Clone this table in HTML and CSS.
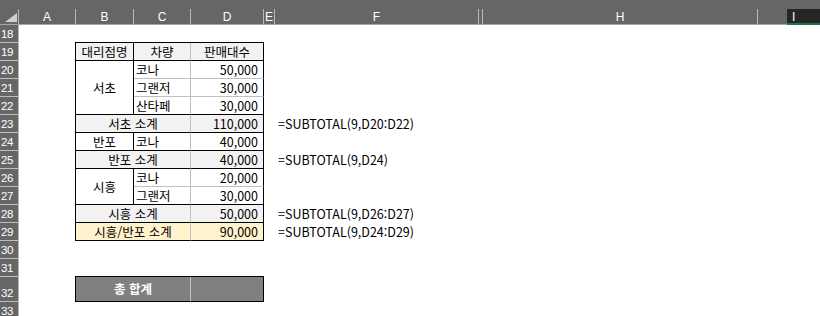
FILE: index.html
```html
<!DOCTYPE html>
<html lang="ko">
<head>
<meta charset="utf-8">
<link rel="stylesheet" href="styles.css">
</head>
<body>
<div class="sheet">
  <div class="colhead">
    <div class="ch corner"><svg width="18" height="15" viewBox="0 0 18 15"><polygon points="17,4 17,13 5,13" fill="#cfcfcf"/></svg></div>
    <div class="ch w-a">A</div>
    <div class="ch w-b">B</div>
    <div class="ch w-c">C</div>
    <div class="ch w-d">D</div>
    <div class="ch w-e">E</div>
    <div class="ch w-f">F</div>
    <div class="ch w-g"></div>
    <div class="ch w-h">H</div>
    <div class="ch w-x"></div>
    <div class="ch sel">I</div>
  </div>
  <div class="body">
    <div class="rowhead">
      <div class="rh">18</div>
      <div class="rh">19</div>
      <div class="rh">20</div>
      <div class="rh">21</div>
      <div class="rh">22</div>
      <div class="rh">23</div>
      <div class="rh">24</div>
      <div class="rh">25</div>
      <div class="rh">26</div>
      <div class="rh">27</div>
      <div class="rh">28</div>
      <div class="rh">29</div>
      <div class="rh">30</div>
      <div class="rh">31</div>
      <div class="rh tall">32</div>
      <div class="rh">33</div>
    </div>
    <div class="content">
      <div class="tables">
        <div class="tbl">
          <div class="c ctr rb bb gray">대리점명</div>
          <div class="c ctr bb gray">차량</div>
          <div class="c ctr rb bb gray">판매대수</div>

          <div class="c ctr rb bb span3">서초</div>
          <div class="c">코나</div>
          <div class="c num rb">50,000</div>
          <div class="c">그랜저</div>
          <div class="c num rb">30,000</div>
          <div class="c bb">산타페</div>
          <div class="c num rb bb">30,000</div>

          <div class="c ctr bb gray wide">서초 소계</div>
          <div class="c num rb bb gray">110,000</div>

          <div class="c ctr rb bb">반포</div>
          <div class="c bb">코나</div>
          <div class="c num rb bb">40,000</div>

          <div class="c ctr bb gray wide">반포 소계</div>
          <div class="c num rb bb gray">40,000</div>

          <div class="c ctr rb bb span2">시흥</div>
          <div class="c">코나</div>
          <div class="c num rb">20,000</div>
          <div class="c bb">그랜저</div>
          <div class="c num rb bb">30,000</div>

          <div class="c ctr bb gray wide">시흥 소계</div>
          <div class="c num rb bb gray">50,000</div>

          <div class="c ctr bb yel wide">시흥/반포 소계</div>
          <div class="c num rb bb yel">90,000</div>
        </div>
        <div class="tbl total">
          <div class="c ctr bb wide tot">총 합계</div>
          <div class="c rb bb"></div>
        </div>
      </div>
      <div class="formulas">
        <div class="frow"></div>
        <div class="frow"></div>
        <div class="frow"></div>
        <div class="frow"></div>
        <div class="frow">=SUBTOTAL(9,D20:D22)</div>
        <div class="frow"></div>
        <div class="frow">=SUBTOTAL(9,D24)</div>
        <div class="frow"></div>
        <div class="frow"></div>
        <div class="frow">=SUBTOTAL(9,D26:D27)</div>
        <div class="frow">=SUBTOTAL(9,D24:D29)</div>
      </div>
    </div>
  </div>
</div>
</body>
</html>
```
FILE: styles.css
```css
html, body {
  margin: 0;
  padding: 0;
  background: #fff;
}

.sheet {
  width: 820px;
  height: 316px;
  overflow: hidden;
}

/* column header */
.colhead {
  display: flex;
  height: 25px;
  box-sizing: border-box;
  padding-top: 9px;
  background: #666666;
  border-bottom: 1px solid #a6a6a6;
}

.ch {
  flex: none;
  height: 15px;
  box-sizing: border-box;
  border-right: 1px solid #b8b8b8;
  color: #ffffff;
  font-family: "Liberation Sans", Arial, sans-serif;
  font-size: 12px;
  line-height: 16px;
  text-align: center;
}

.corner { width: 19px; }
.corner svg { display: block; }
.w-a { width: 57px; }
.w-b { width: 58px; }
.w-c { width: 57px; }
.w-d { width: 73px; }
.w-e { width: 11px; }
.w-f { width: 204px; }
.w-g { width: 4px; }
.w-h { width: 275px; }
.w-x { width: 29px; border-right: none; }

.sel {
  width: 40px;
  height: 16px;
  background: #262626;
  border-right: none;
  border-bottom: 2px solid #217346;
  text-align: left;
  padding-left: 5px;
}

/* body */
.body {
  display: flex;
  height: 291px;
}

.rowhead {
  flex: none;
  width: 19px;
  box-sizing: border-box;
  background: #666666;
  border-right: 1px solid #b8b8b8;
}

.rh {
  height: 18px;
  box-sizing: border-box;
  border-bottom: 1px solid #bdbdbd;
  color: #ffffff;
  font-family: "Liberation Sans", Arial, sans-serif;
  font-size: 11.5px;
  letter-spacing: -0.4px;
  line-height: 12px;
  display: flex;
  align-items: flex-end;
  padding: 0 0 2px 1px;
}

.rh.tall { height: 25px; }

.content {
  flex: 1;
  display: flex;
  padding-top: 17px;
  font-family: "Noto Sans CJK KR", "Noto Sans", sans-serif;
  color: #000;
}

.tables {
  margin-left: 56px;
  width: 189px;
  flex: none;
}

.tbl {
  display: grid;
  grid-template-columns: 58px 57px 73px;
  grid-auto-rows: 18px;
  border-top: 1px solid #000;
  border-left: 1px solid #000;
}

.c {
  box-sizing: border-box;
  border-right: 1px solid #bfbfbf;
  border-bottom: 1px solid #bfbfbf;
  display: flex;
  align-items: center;
  padding: 0 2px;
  font-size: 12.5px;
  line-height: 16px;
  white-space: nowrap;
}

.ctr { justify-content: center; }
.num { justify-content: flex-end; padding-right: 5px; }
.rb { border-right-color: #000; }
.bb { border-bottom-color: #000; }
.gray { background: #f2f2f2; }
.yel { background: #fff2cc; }
.span3 { grid-row: span 3; }
.span2 { grid-row: span 2; }
.wide { grid-column: span 2; }

.total {
  margin-top: 35px;
  grid-auto-rows: 25px;
  background: #808080;
}

.tot {
  color: #ffffff;
  font-weight: 700;
}

.formulas {
  margin-left: 14px;
  padding-top: 1px;
}

.frow {
  height: 18px;
  display: flex;
  align-items: center;
  font-size: 12.5px;
  line-height: 16px;
  white-space: nowrap;
}
```
